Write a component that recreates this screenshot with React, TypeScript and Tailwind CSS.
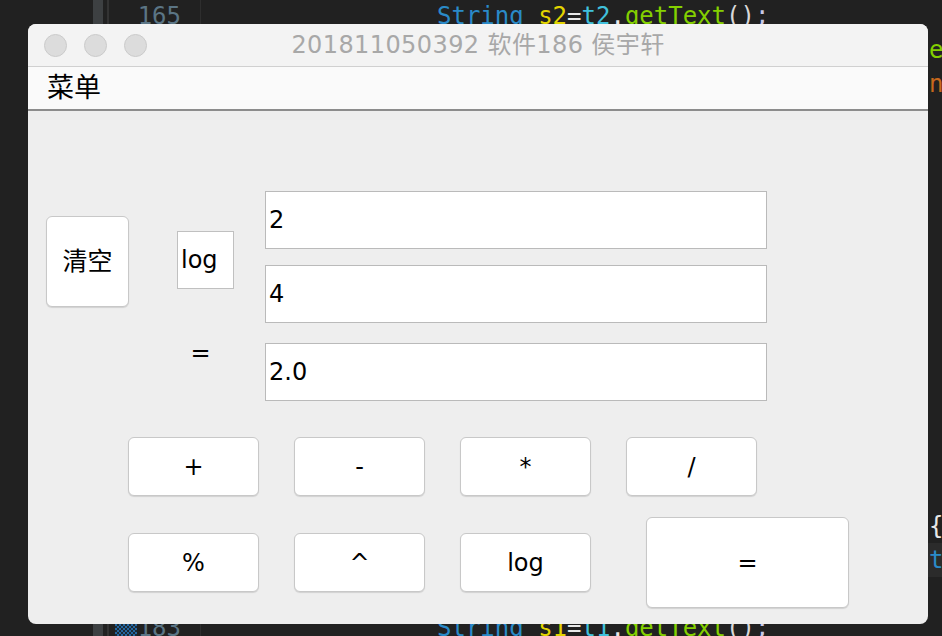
import React from 'react'

const ui = { fontFamily: '"DejaVu Sans", "Noto Sans CJK SC", sans-serif' }
const mono = { fontFamily: '"DejaVu Sans Mono", "Liberation Mono", monospace' }

function CalcButton({ label, wide }: { label: string; wide?: boolean }) {
  return (
    <button
      className={
        'flex items-center justify-center bg-white border border-[#c8c8c8] rounded-[6px] shadow-[0_1px_1px_rgba(0,0,0,0.12)] text-[24px] text-black ' +
        (wide ? 'w-[203px] h-[91px]' : 'w-[131px] h-[59px]')
      }
    >
      {label}
    </button>
  )
}

function Field({ value, className }: { value: string; className?: string }) {
  return (
    <div className={'h-[58px] w-[502px] bg-white border border-[#bababa] flex items-center pl-[3px] text-[24px] text-black ' + (className ?? '')}>
      {value}
    </div>
  )
}

export default function App() {
  return (
    <div className="relative w-[942px] h-[636px] overflow-hidden bg-[#212121]" style={ui}>
      {/* editor behind the window */}
      <div className="absolute left-[93px] top-0 h-full w-[10px] bg-[#3d4042]" />
      <div className="absolute left-[107px] top-0 h-full w-[2px] bg-[#333333]" />
      <div className="absolute left-[200px] top-0 h-full w-px bg-[#2e2e2e]" />
      <div className="absolute left-[928px] top-[543px] w-[14px] h-[34px] bg-[#2b2b2b]" />
      <div className="absolute left-[115px] top-[622px] w-[22px] h-[14px] bg-[repeating-conic-gradient(#2466a0_0_25%,#1b2a36_0_50%)] bg-[length:4px_4px]" />

      <div className="absolute left-0 top-[-1px] w-full flex flex-col text-[24px] leading-[34px]" style={mono}>
        <div className="h-[34px] flex">
          <span className="w-[181px] text-right text-[#5b7585]">165</span>
          <span className="ml-[256px] whitespace-pre">
            <span className="text-[#2a8ac8]">String</span>{' '}
            <span className="text-[#e2d400]">s2</span>
            <span className="text-[#e8e8e8]">=</span>
            <span className="text-[#40c0dc]">t2</span>
            <span className="text-[#e8e8e8]">.</span>
            <span className="text-[#84d000]">getText</span>
            <span className="text-[#d8d8d8]">()</span>
            <span className="text-[#c8c8e8]">;</span>
          </span>
        </div>
        <div className="h-[34px] pl-[929px] text-[#84d000]">e</div>
        <div className="h-[34px] pl-[929px] text-[#c8681c]">n</div>
        <div className="h-[34px]" />
        <div className="h-[34px]" />
        <div className="h-[34px]" />
        <div className="h-[34px]" />
        <div className="h-[34px]" />
        <div className="h-[34px]" />
        <div className="h-[34px]" />
        <div className="h-[34px]" />
        <div className="h-[34px]" />
        <div className="h-[34px]" />
        <div className="h-[34px]" />
        <div className="h-[34px]" />
        <div className="h-[34px] pl-[929px] text-[#e8e8e8]">{'{'}</div>
        <div className="h-[34px] pl-[929px] text-[#2a8ac8]">t</div>
        <div className="h-[34px]" />
        <div className="h-[34px] flex">
          <span className="w-[181px] text-right text-[#5b7585]">183</span>
          <span className="ml-[256px] whitespace-pre">
            <span className="text-[#2a8ac8]">String</span>{' '}
            <span className="text-[#e2d400]">s1</span>
            <span className="text-[#e8e8e8]">=</span>
            <span className="text-[#40c0dc]">t1</span>
            <span className="text-[#e8e8e8]">.</span>
            <span className="text-[#84d000]">getText</span>
            <span className="text-[#d8d8d8]">()</span>
            <span className="text-[#c8c8e8]">;</span>
          </span>
        </div>
      </div>

      {/* window */}
      <div className="absolute left-[28px] top-[24px] w-[900px] h-[600px] rounded-[8px] overflow-hidden flex flex-col bg-[#eeeeee]">
        <div className="relative h-[43px] shrink-0 bg-[#f3f3f3] border-b border-[#d0d0d0] flex items-center">
          <div className="flex gap-[17px] pl-[16px]">
            <span className="w-[23px] h-[23px] rounded-full bg-[#dcdcdc] border border-[#cbcbcb]" />
            <span className="w-[23px] h-[23px] rounded-full bg-[#dcdcdc] border border-[#cbcbcb]" />
            <span className="w-[23px] h-[23px] rounded-full bg-[#dcdcdc] border border-[#cbcbcb]" />
          </div>
          <div className="absolute inset-0 flex items-center justify-center text-[24px] tracking-[0.4px] text-[#a8a8a8] pointer-events-none">
            201811050392 软件186 侯宇轩
          </div>
        </div>
        <div className="h-[44px] shrink-0 bg-[#fafafa] border-b-2 border-[#8c8c8c] flex items-center pl-[19px] text-[27px] text-black">
          菜单
        </div>

        <div className="flex-1 flex flex-col">
          <div className="flex pt-[80px]">
            <div className="ml-[18px] pt-[25px]">
              <button className="w-[83px] h-[91px] bg-white border border-[#c8c8c8] rounded-[6px] shadow-[0_1px_1px_rgba(0,0,0,0.12)] text-[25px] text-black">
                清空
              </button>
            </div>
            <div className="ml-[48px] w-[57px] flex flex-col">
              <div className="mt-[40px] h-[58px] bg-white border border-[#c0c0c0] flex items-center pl-[3px] text-[24px] text-black">
                log
              </div>
              <div className="mt-[49px] h-[30px] pr-[10px] flex items-center justify-center text-[24px] text-black">=</div>
            </div>
            <div className="ml-[31px] flex flex-col">
              <Field value="2" />
              <Field value="4" className="mt-[16px]" />
              <Field value="2.0" className="mt-[20px]" />
            </div>
          </div>

          <div className="mt-[36px] pl-[100px] flex gap-[35px]">
            <CalcButton label="+" />
            <CalcButton label="-" />
            <CalcButton label="*" />
            <CalcButton label="/" />
          </div>
          <div className="mt-[21px] pl-[100px] flex items-center gap-[35px]">
            <CalcButton label="%" />
            <CalcButton label="^" />
            <CalcButton label="log" />
            <div className="ml-[20px]">
              <CalcButton label="=" wide />
            </div>
          </div>
        </div>
      </div>
    </div>
  )
}
